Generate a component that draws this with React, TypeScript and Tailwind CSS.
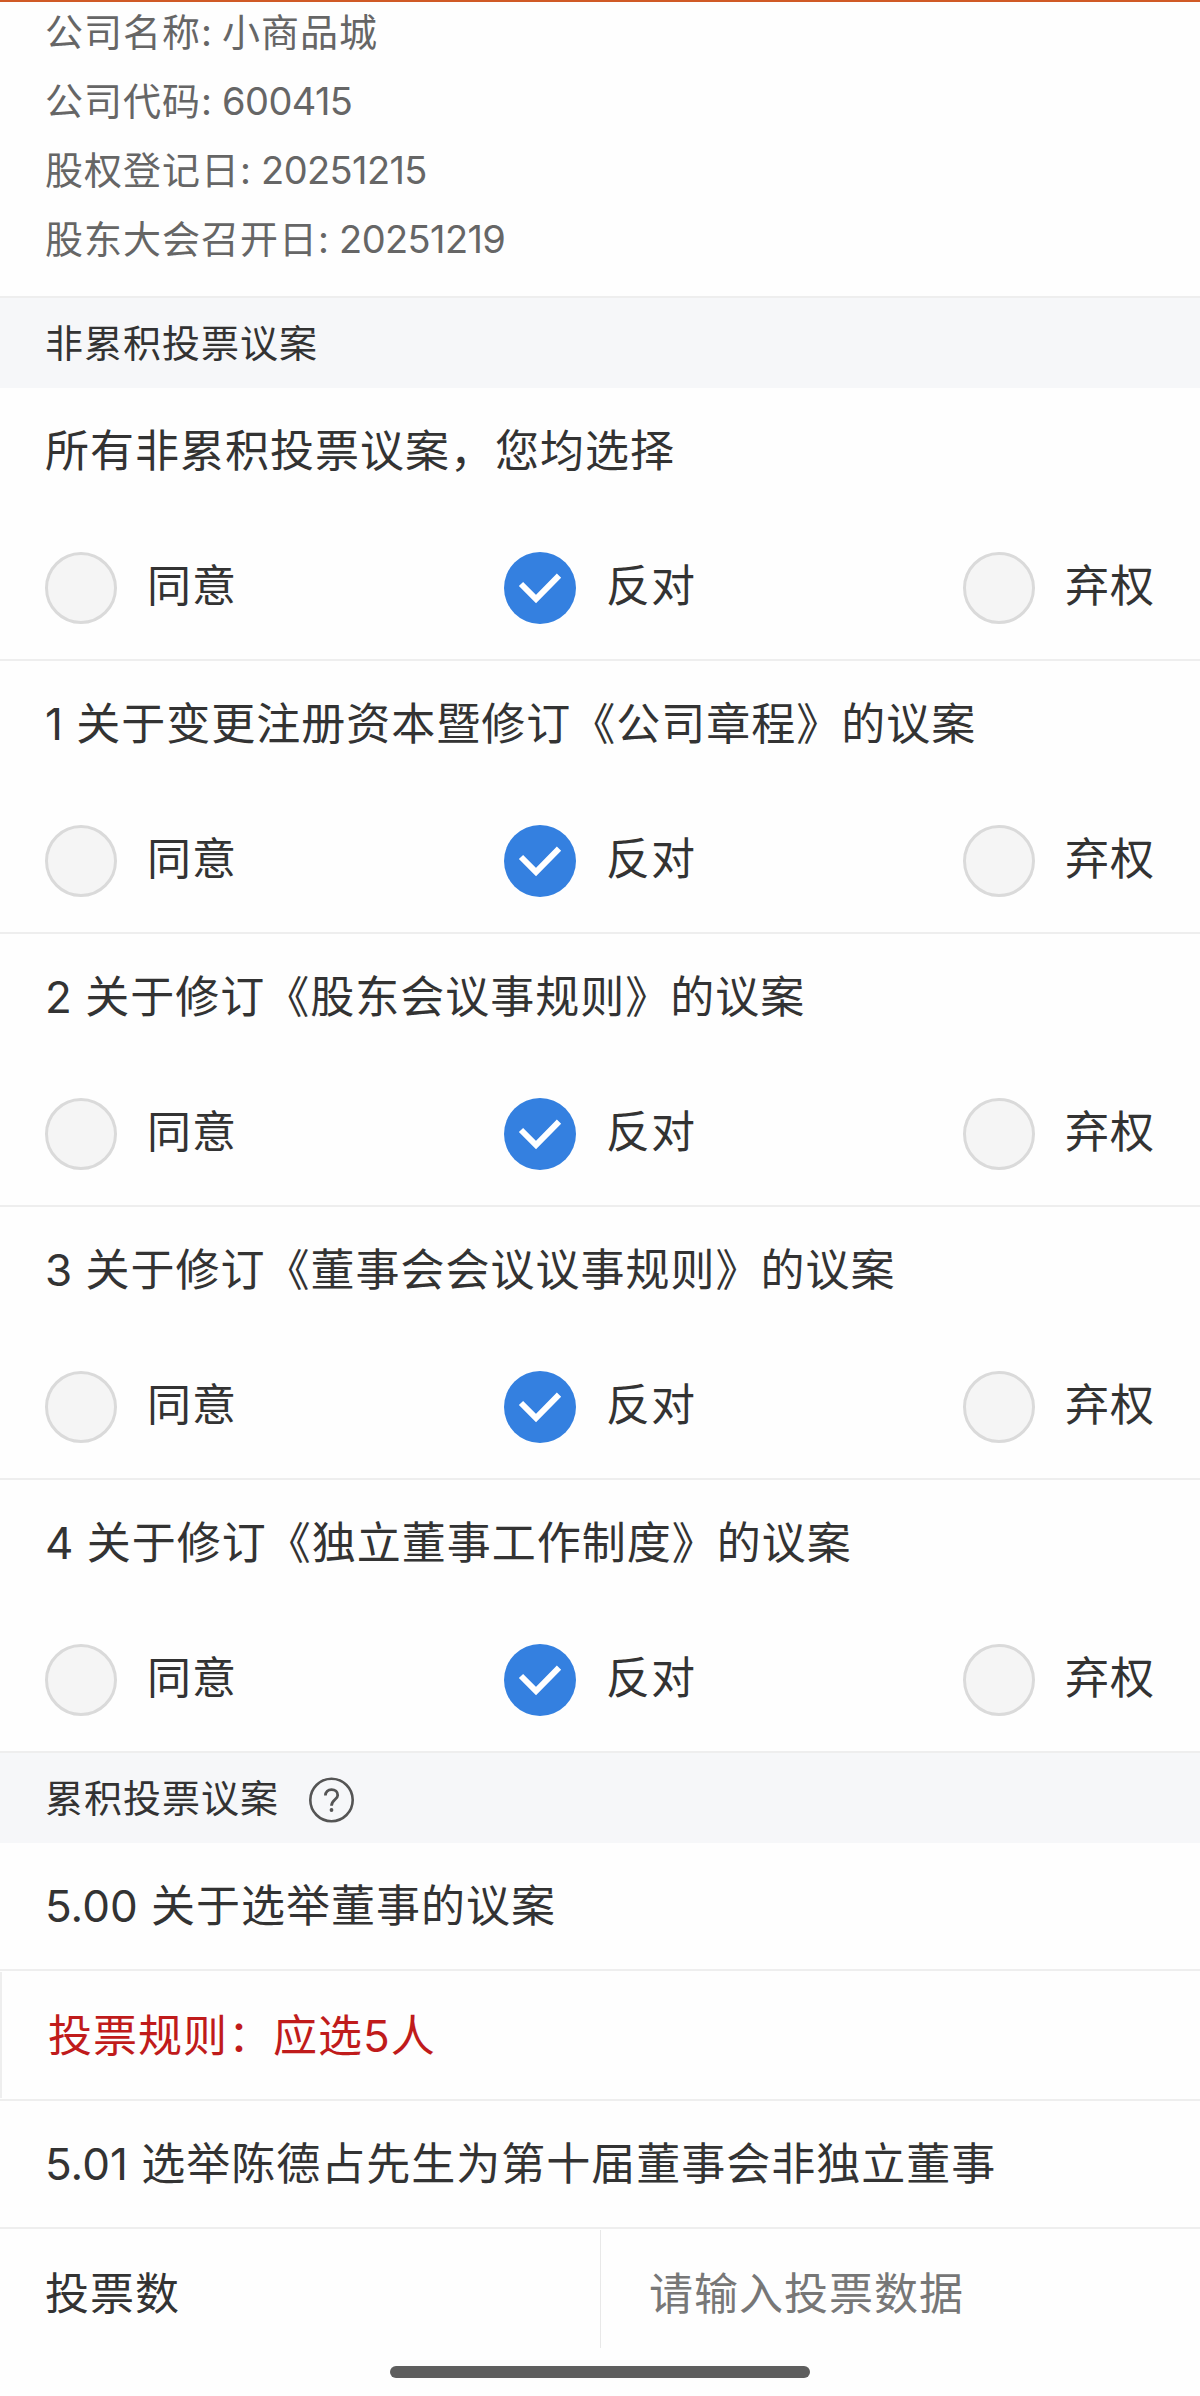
import React from 'react';

const companyInfo = [
  { label: '公司名称', value: '小商品城' },
  { label: '公司代码', value: '600415' },
  { label: '股权登记日', value: '20251215' },
  { label: '股东大会召开日', value: '20251219' },
];

const proposals = [
  { no: '', title: '所有非累积投票议案，您均选择' },
  { no: '1', title: '关于变更注册资本暨修订《公司章程》的议案' },
  { no: '2', title: '关于修订《股东会议事规则》的议案' },
  { no: '3', title: '关于修订《董事会会议议事规则》的议案' },
  { no: '4', title: '关于修订《独立董事工作制度》的议案' },
];

const options = ['同意', '反对', '弃权'];

const Radio: React.FC<{ checked: boolean }> = ({ checked }) =>
  checked ? (
    <span className="flex h-[72px] w-[72px] items-center justify-center rounded-full bg-[#3480e0]">
      <svg className="h-[72px] w-[72px]" viewBox="0 0 72 72" fill="none">
        <path d="M17 32 L32 47 L55 23.7" stroke="#fff" strokeWidth="6" />
      </svg>
    </span>
  ) : (
    <span className="h-[72px] w-[72px] rounded-full border-3 border-[#dadada] bg-[#f5f5f5]" />
  );

const Title: React.FC<{ no: string; title: string }> = ({ no, title }) => (
  <h3 className="leading-[66px] whitespace-nowrap">
    {no && <span className="mr-px tracking-normal">{no} </span>}
    {title}
  </h3>
);

const Proposal: React.FC<{ no: string; title: string }> = ({ no, title }) => (
  <div className="h-[273px] border-b-2 border-[#eeeeee] px-[45px] pt-[30px]">
    <Title no={no} title={title} />
    <div className="mt-[68px] flex justify-between">
      {options.map((option) => (
        <label key={option} className="flex items-center gap-[30px]">
          <Radio checked={option === '反对'} />
          <span className="pb-[5px] leading-[66px]">{option}</span>
        </label>
      ))}
    </div>
  </div>
);

const App: React.FC = () => {
  return (
    <div className="flex h-[2396px] w-[1200px] flex-col overflow-hidden bg-[#fefefe] font-[Inter,'Noto_Sans_CJK_SC',sans-serif] text-[44px] tracking-[1px] text-[#333333]">
      {/* Company info */}
      <div className="h-[298px] shrink-0 border-t-2 border-b-2 border-t-[#d05a26] border-b-[#eeeeee] px-[45px] text-[38px] text-[#666666]">
        <div className="-mt-[4px]">
          {companyInfo.map((item) => (
            <p key={item.label} className="leading-[69px]">
              {item.label}
              <span className="tracking-[-0.3px]">: </span>
              <span className={/\d/.test(item.value) ? 'tracking-[-0.6px]' : ''}>{item.value}</span>
            </p>
          ))}
        </div>
      </div>

      {/* Non-cumulative proposals */}
      <div className="flex h-[90px] shrink-0 items-center bg-[#f6f7f9] px-[45px] text-[38px]">
        非累积投票议案
      </div>
      {proposals.map((item) => (
        <Proposal key={item.title} no={item.no} title={item.title} />
      ))}

      {/* Cumulative proposals */}
      <div className="flex h-[90px] shrink-0 items-center gap-[30px] bg-[#f6f7f9] px-[45px] text-[38px]">
        <span>累积投票议案</span>
        <svg className="mt-[3px] h-[46px] w-[46px]" viewBox="0 0 46 46" fill="none" stroke="#555" strokeWidth="2.6">
          <circle cx="22.5" cy="23" r="21.2" />
          <path d="M16.4 18.6 C16.4 14.8 19 12.6 22.5 12.6 C26.1 12.6 28.7 14.8 28.7 18.2 C28.7 22.4 22.5 22.8 22.5 28.8" strokeWidth="2.8" />
          <circle cx="22.5" cy="33" r="1.9" fill="#555" stroke="none" />
        </svg>
      </div>
      <div className="flex h-[128px] shrink-0 items-center border-b-2 border-[#eeeeee] px-[45px]">
        <Title no="5.00" title="关于选举董事的议案" />
      </div>
      <div className="flex h-[130px] shrink-0 items-center border-b-2 border-[#eeeeee]">
        <div className="flex h-[126px] flex-1 items-center border-l-2 border-[#eeeeee] pt-px pl-[46px] text-[#c01b1b]">
          投票规则：应选5人
        </div>
      </div>
      <div className="flex h-[128px] shrink-0 items-center border-b-2 border-[#eeeeee] px-[45px]">
        <Title no="5.01" title="选举陈德占先生为第十届董事会非独立董事" />
      </div>
      <div className="flex h-[120px] shrink-0 items-center">
        <div className="w-[600px] px-[45px] pt-[9px]">投票数</div>
        <div className="flex h-[118px] flex-1 items-center border-l border-[#e8e8e8] pt-[9px] pl-[48px] text-[#777777]">
          请输入投票数据
        </div>
      </div>

      {/* Home indicator */}
      <div className="mx-auto mt-[17px] h-3 w-[420px] shrink-0 rounded-full bg-[#5e5e5e]" />
    </div>
  );
};

export default App;
